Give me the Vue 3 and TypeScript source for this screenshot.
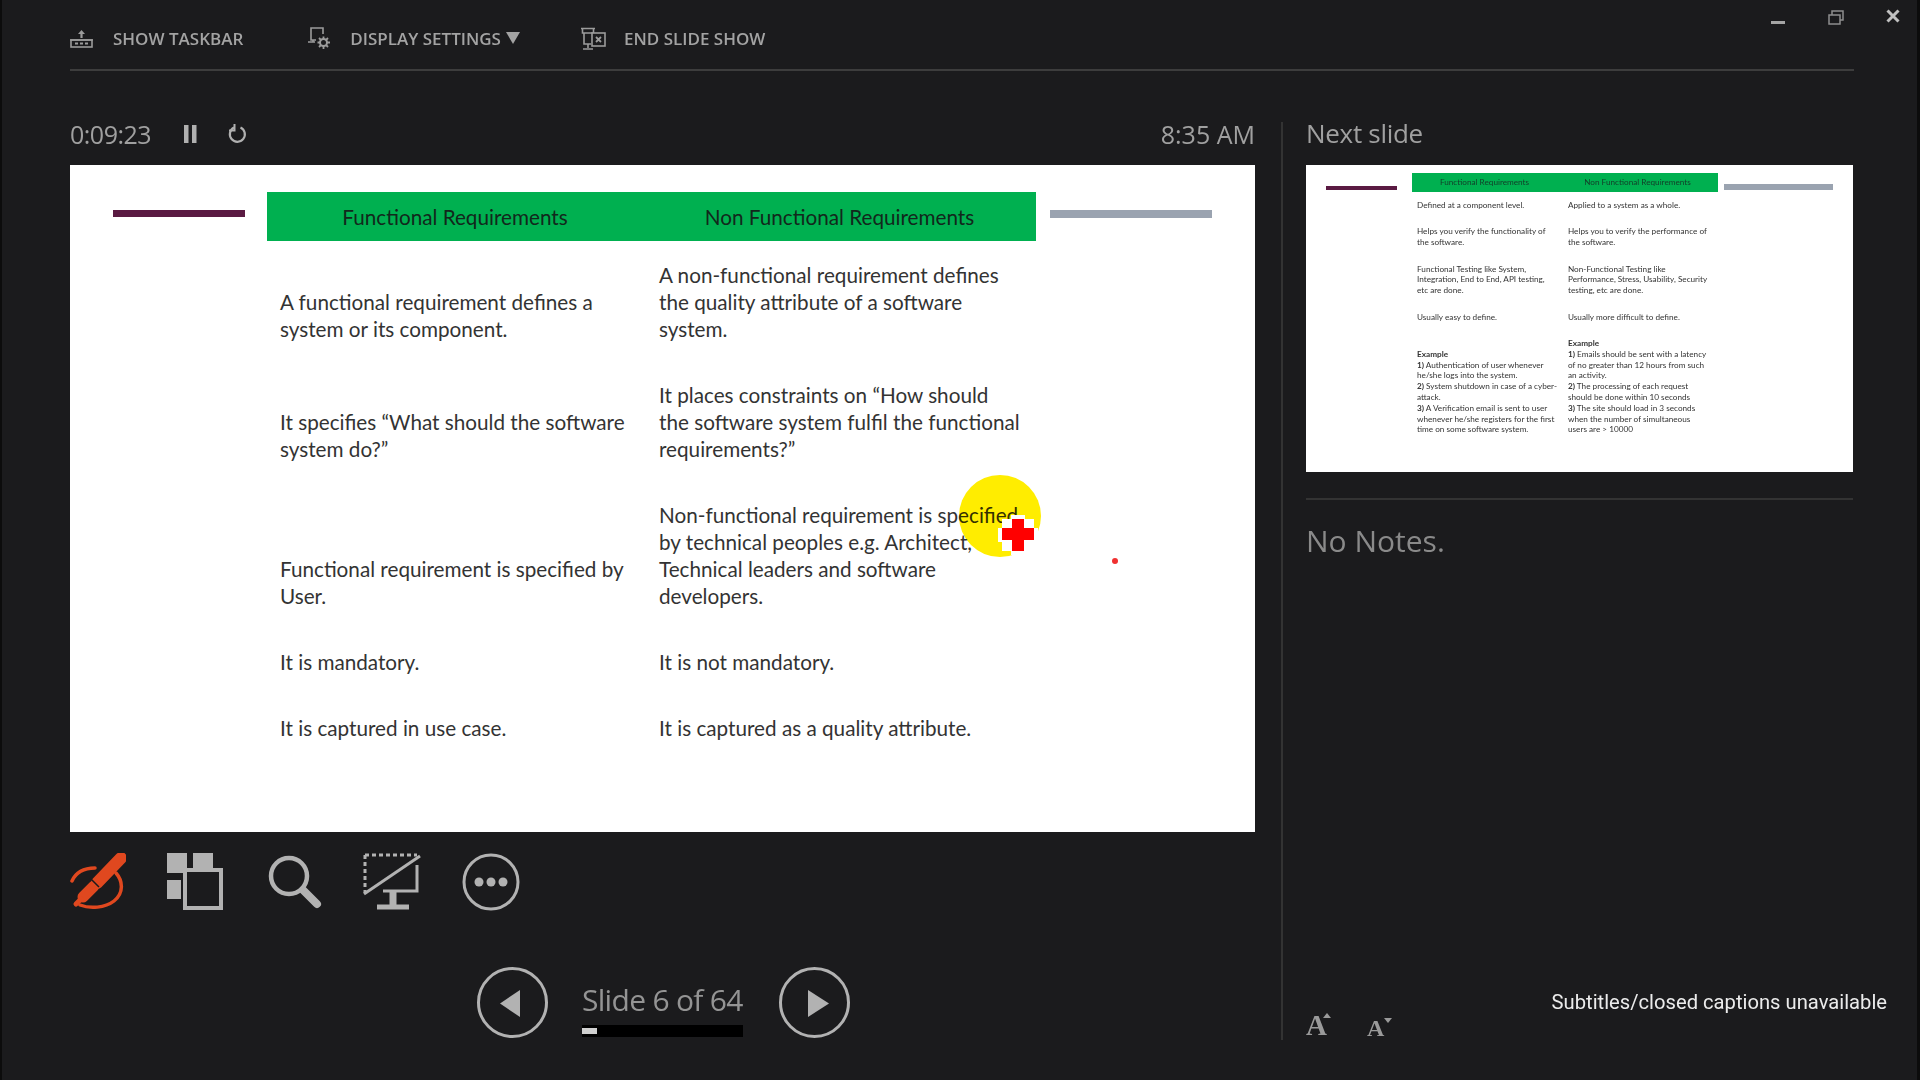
<script setup lang="ts">
interface Line {
  lead?: string
  text: string
}

const mainRows: string[][][] = [
  [
    ['A functional requirement defines a', 'system or its component.'],
    ['A non-functional requirement defines', 'the quality attribute of a software', 'system.'],
  ],
  [
    ['It specifies “What should the software', 'system do?”'],
    ['It places constraints on “How should', 'the software system fulfil the functional', 'requirements?”'],
  ],
  [
    ['Functional requirement is specified by', 'User.'],
    ['Non-functional requirement is specified', 'by technical peoples e.g. Architect,', 'Technical leaders and software', 'developers.'],
  ],
  [['It is mandatory.'], ['It is not mandatory.']],
  [['It is captured in use case.'], ['It is captured as a quality attribute.']],
]

const plain = (lines: string[]): Line[] => lines.map((text) => ({ text }))

const thumbRows: Line[][][] = [
  [plain(['Defined at a component level.']), plain(['Applied to a system as a whole.'])],
  [
    plain(['Helps you verify the functionality of', 'the software.']),
    plain(['Helps you to verify the performance of', 'the software.']),
  ],
  [
    plain(['Functional Testing like System,', 'Integration, End to End, API testing,', 'etc are done.']),
    plain(['Non-Functional Testing like', 'Performance, Stress, Usability, Security', 'testing, etc are done.']),
  ],
  [plain(['Usually easy to define.']), plain(['Usually more difficult to define.'])],
  [
    [
      { lead: 'Example', text: '' },
      { lead: '1)', text: ' Authentication of user whenever' },
      { text: 'he/she logs into the system.' },
      { lead: '2)', text: ' System shutdown in case of a cyber-' },
      { text: 'attack.' },
      { lead: '3)', text: ' A Verification email is sent to user' },
      { text: 'whenever he/she registers for the first' },
      { text: 'time on some software system.' },
    ],
    [
      { lead: 'Example', text: '' },
      { lead: '1)', text: ' Emails should be sent with a latency' },
      { text: 'of no greater than 12 hours from such' },
      { text: 'an activity.' },
      { lead: '2)', text: ' The processing of each request' },
      { text: 'should be done within 10 seconds' },
      { lead: '3)', text: ' The site should load in 3 seconds' },
      { text: 'when the number of simultaneous' },
      { text: 'users are > 10000' },
    ],
  ],
]
</script>

<template>
  <div class="stage">
    <div class="screen">
      <header class="topbar">
        <button class="top-btn">
          <svg width="23" height="19" viewBox="0 0 23 19" fill="none" stroke="#9c9c9c">
            <path d="M11.500 1 15 5h-2.400v4h-2.200V5H8z" fill="#9c9c9c" stroke="none" />
            <path d="M0 11h23" stroke-width="1.500" />
            <rect x="1" y="11" width="21" height="7" stroke-width="1.600" />
            <path d="M5 14.500h3M10 14.500h3M15 14.500h3" stroke-width="2" />
          </svg>
          <span>SHOW TASKBAR</span>
        </button>
        <button class="top-btn btn-display">
          <svg width="23" height="23" viewBox="0 0 23 23" fill="none" stroke="#9c9c9c">
            <path d="M8 13H3V1h12v6" stroke-width="1.600" />
            <path d="M0 15h7M5 13v2" stroke-width="1.500" />
            <circle cx="15.500" cy="15.500" r="3.500" stroke-width="2" />
            <path d="M15.500 9.500v2.500M15.500 19v3M9.500 15.500H12M19 15.500h3M11 11l2 2M18 18l2 2M20 11l-2 2M13 18l-2 2" stroke-width="1.800" />
          </svg>
          <span>DISPLAY SETTINGS</span>
          <i class="caret"></i>
        </button>
        <button class="top-btn btn-end">
          <svg width="25" height="23" viewBox="0 0 25 23" fill="none" stroke="#9c9c9c">
            <path d="M0 1.500h14M1.500 1.500V6h11V1.500M3 6v11h7M7 17v4M2 22h10" stroke-width="1.600" />
            <rect x="11" y="6" width="13" height="13" fill="#1b1b1d" stroke-width="1.600" />
            <path d="M15 10l5 5M20 10l-5 5" stroke-width="1.800" />
          </svg>
          <span>END SLIDE SHOW</span>
        </button>
      </header>

      <div class="win-controls">
        <svg class="win-min" width="15" height="6" viewBox="0 0 15 6"><rect y="2" width="14" height="3" fill="#a5a5a5" /></svg>
        <svg width="16" height="17" viewBox="0 0 16 17" fill="none" stroke="#8e8e8e" stroke-width="1.500">
          <rect x="1" y="6" width="11" height="9" />
          <path d="M4 6V2h11v9h-3" />
        </svg>
        <svg width="14" height="14" viewBox="0 0 14 14" stroke="#c0c0c0" stroke-width="3">
          <path d="M1.500 1.500l11 11M12.500 1.500l-11 11" />
        </svg>
      </div>

      <main class="main">
        <section class="left">
          <div class="status">
            <span class="timer">0:09:23</span>
            <svg class="pause" width="13" height="18" viewBox="0 0 13 18" fill="#b0b0b0">
              <rect width="4.500" height="18" />
              <rect x="8" width="4.500" height="18" />
            </svg>
            <svg class="reload" width="20" height="20" viewBox="0 0 20 20" fill="none" stroke="#b0b0b0" stroke-width="2.200">
              <path d="M12.500 3.500A7.500 7.500 0 1 1 6 3.600" />
              <path d="M6.500 0v6.500H1" stroke-width="2" />
            </svg>
            <span class="clock">8:35 AM</span>
          </div>

          <div class="slide">
            <div class="slide-head">
              <i class="bar-purple"></i>
              <div class="green-head">
                <span>Functional Requirements</span>
                <span>Non Functional Requirements</span>
              </div>
              <i class="bar-gray"></i>
            </div>
            <div class="slide-table">
              <template v-for="(row, r) in mainRows" :key="r">
                <div v-for="(cell, c) in row" :key="c" class="cell">
                  <div v-for="line in cell" :key="line">{{ line }}</div>
                </div>
              </template>
            </div>
            <div class="pointer-glow"></div>
            <svg class="pointer-cross" width="40" height="40" viewBox="0 0 40 40">
              <path d="M13 0h14v4h9v9h4v14h-4v9h-9v4H13v-4H4v-9H0V13h4V4h9z" fill="#fff" />
              <path d="M14 4h12v9h10v12H26v11H14V25H4V13h10z" fill="#f00" />
            </svg>
            <i class="pointer-dot"></i>
          </div>

          <div class="tools">
            <svg width="56" height="59" viewBox="0 0 56 59" fill="none" stroke="#e0481f">
              <path d="M2 28C6 19 15 15 25 15M46 20c7 8 8 20-2 28-9 7-24 8-34 4" stroke-width="3.500" stroke-linecap="round" />
              <path d="M51 5 27 30" stroke-width="12" stroke-linecap="round" />
              <path d="M24 33 13 44" stroke-width="11" stroke-linecap="round" />
              <path d="M11 46 6 51" stroke-width="5" stroke-linecap="round" />
              <path d="M20 25l9 9" stroke="#1b1b1d" stroke-width="1.500" />
            </svg>
            <svg width="56" height="57" viewBox="0 0 56 57">
              <rect width="20" height="20" fill="#b2b2b2" />
              <rect x="26" width="20" height="15" fill="#b2b2b2" />
              <rect y="27" width="14" height="19" fill="#b2b2b2" />
              <rect x="18" y="17" width="36" height="38" fill="#1b1b1d" stroke="#b2b2b2" stroke-width="4" />
            </svg>
            <svg class="tool-search" width="54" height="54" viewBox="0 0 54 54" fill="none" stroke="#b2b2b2">
              <circle cx="21" cy="21" r="18" stroke-width="4.500" />
              <path d="M35 35l14 14" stroke-width="8" stroke-linecap="round" />
            </svg>
            <svg width="58" height="58" viewBox="0 0 58 58" fill="none" stroke="#b2b2b2">
              <path d="M2 2h52M2 2v38" stroke-width="3" stroke-dasharray="4 3" />
              <path d="M1 41 57 3" stroke-width="3" />
              <path d="M54 12v26H20" stroke-width="3" />
              <path d="M30 38v14" stroke-width="7" />
              <path d="M14 54h32" stroke-width="5" />
            </svg>
            <svg width="58" height="58" viewBox="0 0 58 58" fill="none" stroke="#b2b2b2">
              <circle cx="29" cy="29" r="27" stroke-width="3" />
              <g fill="#b2b2b2" stroke="none">
                <circle cx="17" cy="29" r="4.500" />
                <circle cx="29" cy="29" r="4.500" />
                <circle cx="41" cy="29" r="4.500" />
              </g>
            </svg>
          </div>

          <nav class="pager">
            <svg width="71" height="71" viewBox="0 0 71 71" fill="none">
              <circle cx="35.500" cy="35.500" r="34" stroke="#b2b2b2" stroke-width="3" />
              <path d="M43 23v27L23 36.500z" fill="#b2b2b2" />
            </svg>
            <div class="pager-mid">
              <span class="pager-label">Slide 6 of 64</span>
              <div class="track"><i class="track-fill" :style="{ width: `${(6 / 64) * 100}%` }"></i></div>
            </div>
            <svg width="71" height="71" viewBox="0 0 71 71" fill="none">
              <circle cx="35.500" cy="35.500" r="34" stroke="#b2b2b2" stroke-width="3" />
              <path d="M29 23v27l21-13.500z" fill="#b2b2b2" />
            </svg>
          </nav>
        </section>

        <aside class="right">
          <div class="next-label">Next slide</div>
          <div class="thumb">
            <div class="thumb-inner">
              <div class="thumb-head">
                <i class="thumb-purple"></i>
                <div class="thumb-green">
                  <span>Functional Requirements</span>
                  <span>Non Functional Requirements</span>
                </div>
                <i class="thumb-gray"></i>
              </div>
              <div class="thumb-table">
                <template v-for="(row, r) in thumbRows" :key="r">
                  <div v-for="(cell, c) in row" :key="c" class="thumb-cell">
                    <div v-for="(line, l) in cell" :key="l"><b v-if="line.lead">{{ line.lead }}</b>{{ line.text }}</div>
                  </div>
                </template>
              </div>
            </div>
          </div>
          <div class="notes">No Notes.</div>
          <div class="font-size">
            <span class="size-a big">A<i class="up"></i></span>
            <span class="size-a small">A<i class="down"></i></span>
          </div>
        </aside>
      </main>
    </div>
    <div class="caption">Subtitles/closed captions unavailable</div>
  </div>
</template>

<style>
html,
body {
  margin: 0;
  background: #1b1b1d;
}
</style>

<style scoped>
.stage {
  position: relative;
  width: 1920px;
  height: 1080px;
  overflow: hidden;
  background: #1b1b1d;
}
.screen {
  display: flex;
  flex-direction: column;
  height: 100%;
  box-sizing: border-box;
  border-left: 2px solid #0c0c0c;
  border-right: 3px solid #0c0c0c;
  filter: blur(0.5px);
  font-family: "Open Sans", "Liberation Sans", sans-serif;
}
.topbar {
  display: flex;
  align-items: center;
  height: 71px;
  margin: 0 63px 0 68px;
  padding-top: 7px;
  box-sizing: border-box;
  border-bottom: 2px solid #3d3d3d;
}
.top-btn {
  display: flex;
  align-items: center;
  gap: 20px;
  padding: 0;
  border: 0;
  background: none;
  color: #a3a3a3;
  font-family: "Open Sans", sans-serif;
  font-size: 17px;
  font-weight: 600;
}
.btn-display {
  margin-left: 65px;
  gap: 19px;
}
.btn-end {
  margin-left: 61px;
  gap: 18px;
}
.caret {
  width: 0;
  height: 0;
  margin-left: -14px;
  border-left: 7px solid transparent;
  border-right: 7px solid transparent;
  border-top: 12px solid #a3a3a3;
}
.win-controls {
  position: absolute;
  top: 9px;
  right: 17px;
  display: flex;
  align-items: flex-start;
  gap: 42px;
}
.win-min {
  margin-top: 10px;
}
.main {
  flex: 1;
  display: flex;
  margin: 51px 0 40px 68px;
}
.left {
  width: 1185px;
  margin-right: 26px;
}
.status {
  display: flex;
  align-items: center;
  height: 43px;
  padding-bottom: 19px;
  box-sizing: border-box;
  color: #a0a0a0;
  font-size: 25px;
}
.timer {
  letter-spacing: -0.5px;
}
.pause {
  margin-left: 33px;
}
.reload {
  margin-left: 31px;
}
.clock {
  margin-left: auto;
}
.slide {
  position: relative;
  height: 667px;
  background: #fff;
  font-family: Lato, "Open Sans", sans-serif;
  color: #333;
  font-size: 20.7px;
}
.slide-head {
  display: flex;
  align-items: flex-start;
  padding: 27px 0 0 43px;
}
.bar-purple {
  width: 132px;
  height: 7px;
  margin: 18px 22px 0 0;
  background: #5a1a42;
}
.bar-gray {
  width: 162px;
  height: 8px;
  margin: 18px 0 0 14px;
  background: #9aa3b0;
}
.green-head {
  display: grid;
  grid-template-columns: 376px 1fr;
  width: 769px;
  height: 49px;
  align-items: center;
  background: #00b050;
  color: #12281c;
  text-align: center;
}
.slide-table {
  display: grid;
  grid-template-columns: 379px 1fr;
  row-gap: 39px;
  margin-top: 21px;
  padding-left: 210px;
  line-height: 27px;
}
.cell {
  align-self: end;
  white-space: nowrap;
}
.pointer-glow {
  position: absolute;
  left: 889px;
  top: 310px;
  width: 82px;
  height: 82px;
  border-radius: 50%;
  background: #ffed00;
  mix-blend-mode: multiply;
}
.pointer-cross {
  position: absolute;
  left: 928px;
  top: 350px;
}
.pointer-dot {
  position: absolute;
  left: 1042px;
  top: 393px;
  width: 6px;
  height: 6px;
  border-radius: 50%;
  background: #f03030;
}
.tools {
  display: flex;
  align-items: flex-start;
  gap: 41px;
  height: 59px;
  margin-top: 21px;
}
.tool-search {
  margin: 2px 0 0 4px;
}
.pager {
  display: flex;
  align-items: center;
  margin: 55px 0 0 407px;
}
.pager-mid {
  display: flex;
  flex-direction: column;
  align-self: flex-end;
  width: 161px;
  margin: 0 36px 1px 34px;
}
.pager-label {
  color: #949494;
  font-size: 30px;
  line-height: 36px;
  white-space: nowrap;
  font-family: "Open Sans", sans-serif;
  letter-spacing: -0.7px;
}
.track {
  height: 12px;
  margin-top: 7px;
  padding: 3px 0;
  box-sizing: border-box;
  background: #000;
}
.track-fill {
  display: block;
  height: 100%;
  background: #d0d0d0;
}
.right {
  display: flex;
  flex-direction: column;
  width: 547px;
  padding-left: 23px;
  border-left: 2px solid #333;
}
.next-label {
  height: 43px;
  color: #a0a0a0;
  font-size: 26px;
  line-height: 22px;
  letter-spacing: -0.3px;
}
.thumb {
  height: 307px;
  background: #fff;
  filter: blur(0.7px);
}
.thumb-inner {
  color: #333;
  font-family: Lato, sans-serif;
  font-size: 8.2px;
  line-height: 10.8px;
}
.thumb-head {
  display: flex;
  align-items: flex-start;
  padding: 8px 0 0 20px;
}
.thumb-purple {
  width: 71px;
  height: 4px;
  margin: 13px 15px 0 0;
  background: #5a1a42;
}
.thumb-gray {
  width: 109px;
  height: 6px;
  margin: 11px 0 0 6px;
  background: #9aa3b0;
}
.thumb-green {
  display: grid;
  grid-template-columns: 145px 161px;
  align-items: center;
  width: 306px;
  height: 19px;
  background: #00b050;
  color: #12402a;
  text-align: center;
}
.thumb-table {
  display: grid;
  grid-template-columns: 151px 1fr;
  row-gap: 15.6px;
  margin-top: 8px;
  padding-left: 111px;
}
.thumb-cell {
  align-self: end;
  white-space: nowrap;
}
.notes {
  margin-top: 26px;
  padding-top: 21px;
  border-top: 2px solid #333;
  color: #8a8a8a;
  font-size: 30px;
  line-height: 40px;
}
.font-size {
  display: flex;
  align-items: flex-end;
  gap: 40px;
  margin-top: auto;
}
.size-a {
  position: relative;
  font-family: "Liberation Serif", serif;
  font-weight: 700;
  color: #9a9a9a;
  line-height: 1;
}
.size-a.big {
  font-size: 29px;
}
.size-a.small {
  font-size: 24px;
}
.up,
.down {
  position: absolute;
  top: 2px;
  right: -4px;
  width: 0;
  height: 0;
  border-left: 4px solid transparent;
  border-right: 4px solid transparent;
}
.up {
  border-bottom: 5px solid #9a9a9a;
}
.down {
  right: -8px;
  border-top: 5px solid #9a9a9a;
}
.caption {
  position: absolute;
  right: 33px;
  top: 990px;
  color: #ececec;
  font-family: Roboto, sans-serif;
  font-size: 20.2px;
  line-height: 24px;
}
</style>
